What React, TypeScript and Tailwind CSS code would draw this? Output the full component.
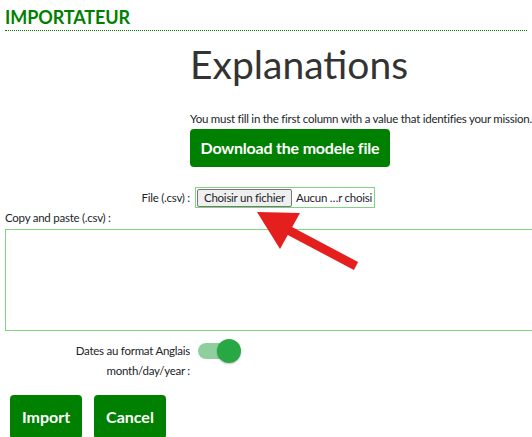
import React from "react";

export default function App() {
  return (
    <div
      className="relative w-[532px] h-[437px] overflow-hidden bg-white text-[#333]"
      style={{ fontFamily: "Lato, 'Open Sans', sans-serif" }}
    >
      <div className="mx-[5px] pt-[7px] pb-[2px] border-b border-dotted border-[#008000]">
        <h2 className="text-[18px] leading-[21px] font-bold text-[#008000] tracking-[-0.1px]">IMPORTATEUR</h2>
      </div>

      <div className="pl-[190px] pt-[8px]">
        <h1 className="text-[39px] leading-[50px] font-normal text-[#333] tracking-[0px]">Explanations</h1>
        <p className="mt-[23px] text-[11.5px] leading-[14px] text-[#212529] whitespace-nowrap tracking-[-0.25px]">
          You must fill in the first column with a value that identifies your mission.
        </p>
        <button className="mt-[3px] h-[38px] w-[200px] rounded-[4px] bg-[#008000] text-white text-[16px] font-bold tracking-[-0.2px]">
          Download the modele file
        </button>
      </div>

      <div className="flex items-center mt-[20px]">
        <div className="w-[190px] text-right text-[11.5px] text-[#212529] tracking-[-0.25px]">File (.csv) :</div>
        <div className="ml-[5px] flex items-center h-[21px] w-[180px] border border-[#7dd67d] pl-[1px]">
          <span className="h-[18px] px-[6px] bg-[#efefef] border border-[#767676] rounded-[2px] text-[11.5px] leading-[16px] text-[#212529] whitespace-nowrap tracking-[-0.25px]">
            Choisir un fichier
          </span>
          <span className="ml-[4px] text-[11.5px] text-[#212529] whitespace-nowrap tracking-[-0.25px]">Aucun …r choisi</span>
        </div>
      </div>

      <div className="pl-[5px] mt-[2px] text-[11.5px] leading-[15px] text-[#212529] tracking-[-0.25px]">Copy and paste (.csv) :</div>
      <div className="ml-[5px] mt-[4px] w-[540px] h-[102px] border border-[#7dd67d]" />

      <div className="flex items-start mt-[0px]">
        <div className="w-[190px] text-right text-[11.5px] leading-[20px] text-[#212529] pt-[10px] tracking-[-0.25px]">
          Dates au format Anglais
          <br />
          month/day/year :
        </div>
        <div className="relative ml-[8px] mt-[12px] w-[44px] h-[16px]">
          <div className="absolute left-0 top-0 w-[38px] h-[16px] rounded-full bg-[#8fcf9d]" />
          <div className="absolute left-[19px] top-[-4px] w-[24px] h-[24px] rounded-full bg-[#28a745] shadow-[0_1px_2px_rgba(0,0,0,0.25)]" />
        </div>
      </div>

      <div className="flex gap-[12px] pl-[10px] mt-[14px]">
        <button className="h-[44px] w-[72px] rounded-[4px] bg-[#008000] text-white text-[16px] font-bold">Import</button>
        <button className="h-[44px] w-[72px] rounded-[4px] bg-[#008000] text-white text-[16px] font-bold">Cancel</button>
      </div>

      <svg className="absolute left-0 top-0 pointer-events-none" width="532" height="437" viewBox="0 0 532 437">
        <line x1="288" y1="230" x2="356" y2="266" stroke="#e51e1e" strokeWidth="9" />
        <polygon points="257,212 300,213 280,249" fill="#e51e1e" />
      </svg>
    </div>
  );
}
